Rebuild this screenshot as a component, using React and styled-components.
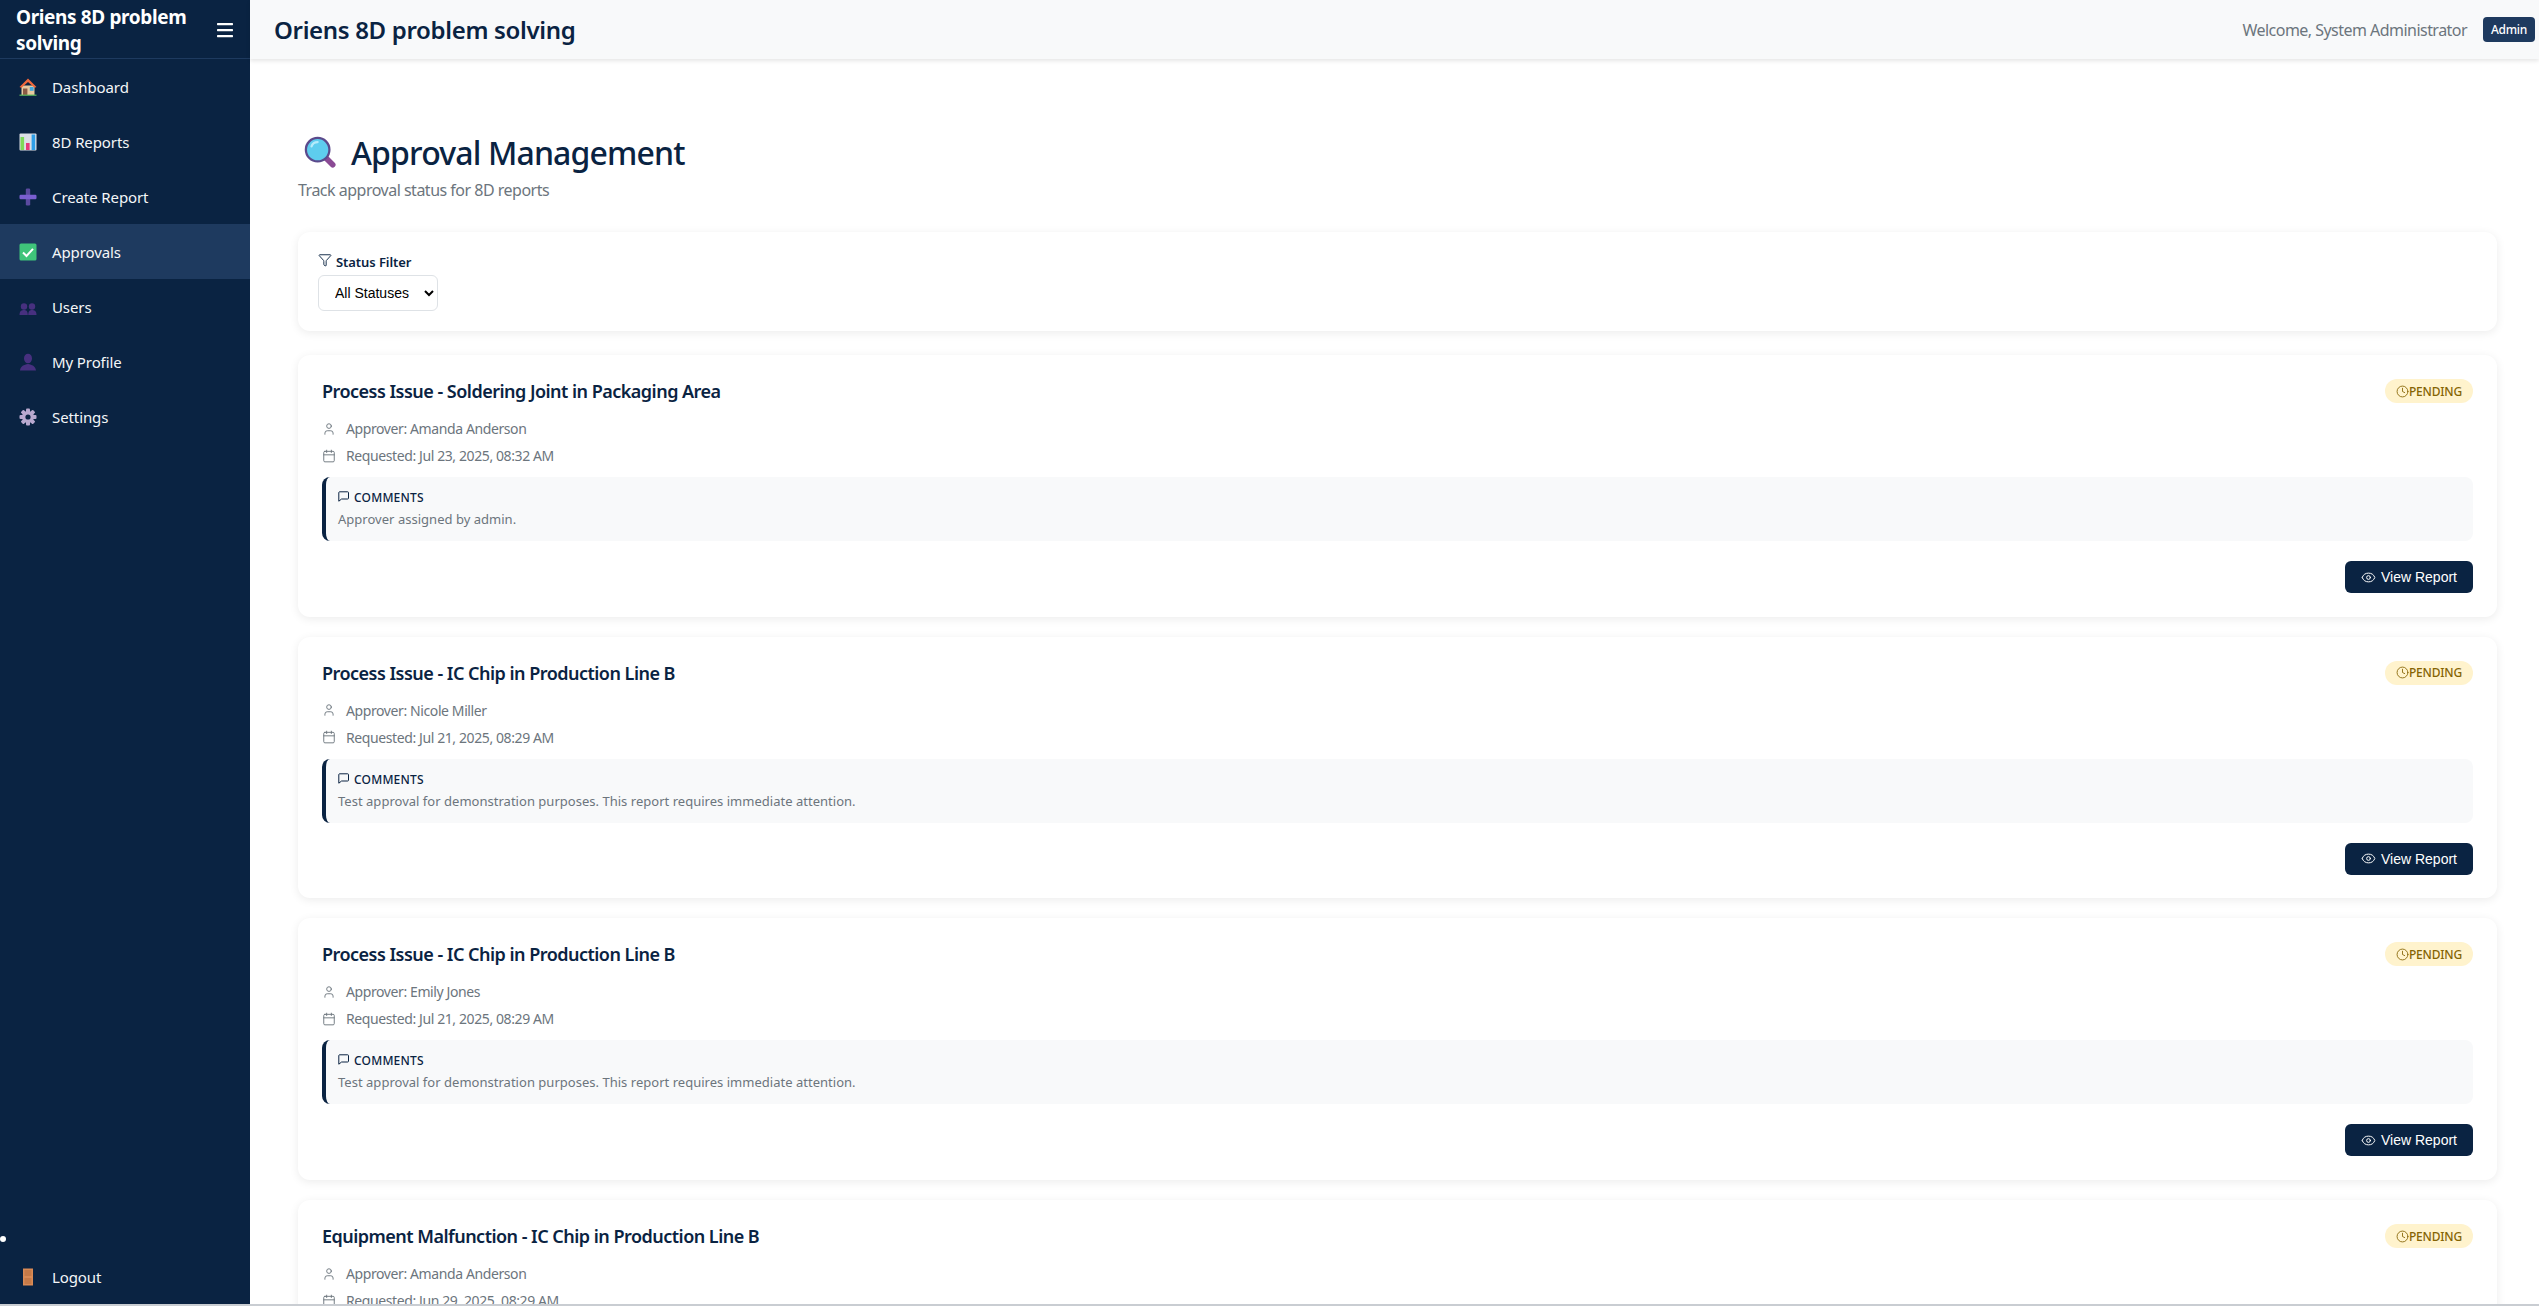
import React from "react";
import styled, { createGlobalStyle } from "styled-components";
import { Filter, User, Calendar, Clock, Eye } from "lucide-react";

const Global = createGlobalStyle`
  html, body { margin: 0; padding: 0; height: 100%; overflow: hidden; background: #fff; }
  * { box-sizing: border-box; }
  body { font-family: "Noto Sans", "Open Sans", sans-serif; color: #0a2342; }
`;

const Shell = styled.div`
  display: flex;
  height: 1304px;
  overflow: hidden;
  background: #fff;
`;
const BottomLine = styled.div`
  height: 2px;
  background: #c9cdd2;
`;
const Sidebar = styled.aside`
  width: 250px;
  flex: none;
  display: flex;
  flex-direction: column;
  background: #0a2342;
  color: #fff;
`;
const Brand = styled.div`
  height: 59px;
  display: flex;
  align-items: center;
  justify-content: space-between;
  padding: 1px 16px 0;
  border-bottom: 1px solid #1e3a5f;
`;
const BrandName = styled.div`
  font-size: 19px;
  font-weight: 700;
  line-height: 26px;
  letter-spacing: -0.37px;
  width: 190px;
`;
const Burger = styled.svg`
  width: 16px;
  height: 16px;
  flex: none;
  margin-right: 1px;
`;
const Nav = styled.nav`
  flex: 1;
  display: flex;
  flex-direction: column;
`;
const NavItem = styled.div`
  height: 55px;
  display: flex;
  align-items: center;
  gap: 15px;
  padding-left: 19px;
  font-size: 15px;
  letter-spacing: -0.1px;
  color: #f4f6f8;
  background: ${(p) => (p.$active ? "#1e3a5f" : "transparent")};
`;
const Emoji = styled.svg`
  width: 18px;
  height: 18px;
  flex: none;
`;
const Footer = styled.div`
  display: flex;
  flex-direction: column;
`;
const Bullet = styled.span`
  width: 6px;
  height: 6px;
  border-radius: 50%;
  background: #fff;
  margin-bottom: 7px;
`;
const Column = styled.div`
  flex: 1;
  min-width: 0;
  display: flex;
  flex-direction: column;
`;
const Header = styled.header`
  height: 59px;
  flex: none;
  display: flex;
  align-items: center;
  justify-content: space-between;
  padding: 0 4px 0 24px;
  background: #f8f9fa;
  box-shadow: 0 2px 4px rgba(0, 0, 0, 0.1);
  position: relative;
`;
const HeaderTitle = styled.div`
  font-size: 24px;
  font-weight: 600;
  letter-spacing: -0.33px;
  color: #0a2342;
`;
const HeaderRight = styled.div`
  display: flex;
  align-items: center;
  gap: 16px;
`;
const Welcome = styled.span`
  font-size: 16px;
  letter-spacing: -0.53px;
  color: #6c757d;
`;
const RoleBadge = styled.span`
  height: 25px;
  padding: 0 8px;
  display: flex;
  align-items: center;
  background: #1e3a5f;
  color: #fff;
  border-radius: 4px;
  font-size: 12px;
  font-weight: 500;
  letter-spacing: -0.3px;
`;
const Main = styled.main`
  flex: 1;
  overflow: hidden;
  padding: 69px 42px 0 48px;
`;
const PageTitle = styled.h1`
  margin: 0;
  height: 48px;
  display: flex;
  align-items: center;
  gap: 15px;
  padding-left: 6px;
  font-size: 32px;
  font-weight: 500;
  letter-spacing: -0.85px;
  color: #0a2342;
`;
const Subtitle = styled.p`
  margin: 2px 0 30px;
  height: 24px;
  line-height: 24px;
  font-size: 16px;
  letter-spacing: -0.5px;
  color: #6c757d;
`;
const FilterCard = styled.section`
  height: 99px;
  margin-bottom: 24px;
  padding: 18px 20px;
  background: #fff;
  border-radius: 12px;
  box-shadow: 0 2px 10px rgba(0, 0, 0, 0.08);
`;
const FilterLabel = styled.label`
  display: flex;
  align-items: center;
  gap: 4px;
  height: 23px;
  font-size: 13px;
  font-weight: 600;
  letter-spacing: -0.07px;
  color: #0a2342;
`;
const FilterGlyph = styled(Filter)`
  margin-top: -3px;
`;
const StatusSelect = styled.select`
  display: block;
  width: 120px;
  height: 36px;
  margin-top: 2px;
  padding: 0 12px;
  border: 1px solid #dee2e6;
  border-radius: 6px;
  background: #fff;
  color: #000;
  font-family: "Liberation Sans", Arial, sans-serif;
  font-size: 14px;
`;
const Card = styled.article`
  height: 261.7px;
  margin-bottom: 20px;
  padding: 24px;
  background: #fff;
  border-radius: 12px;
  box-shadow: 0 2px 10px rgba(0, 0, 0, 0.08);
`;
const CardTop = styled.div`
  display: flex;
  justify-content: space-between;
  align-items: center;
  height: 24px;
  margin-bottom: 12px;
`;
const CardTitle = styled.h3`
  margin: 0;
  font-size: 18px;
  font-weight: 600;
  letter-spacing: -0.52px;
  color: #0a2342;
`;
const Pending = styled.span`
  height: 24px;
  width: 88px;
  display: flex;
  align-items: center;
  justify-content: center;
  border-radius: 12px;
  background: #fff3cd;
  color: #856404;
  font-size: 12px;
  font-weight: 500;
  letter-spacing: -0.2px;
`;
const Meta = styled.div`
  display: flex;
  align-items: center;
  gap: 10px;
  height: 27px;
  font-size: 14px;
  letter-spacing: -0.4px;
  color: #6c757d;
`;
const Comments = styled.div`
  height: 64px;
  margin-top: 8px;
  padding: 11px 12px 0;
  background: #f8f9fa;
  border-left: 4px solid #0a2342;
  border-radius: 8px;
`;
const CommentsHead = styled.div`
  display: flex;
  align-items: center;
  gap: 5px;
  height: 19px;
  font-size: 12px;
  font-weight: 500;
  letter-spacing: 0.2px;
  text-transform: uppercase;
  color: #0a2342;
`;
const CommentGlyph = styled.svg`
  width: 11px;
  height: 11px;
  flex: none;
  margin-top: -2px;
`;
const CommentsBody = styled.div`
  height: 20px;
  line-height: 20px;
  margin-top: 2px;
  font-size: 13px;
  letter-spacing: 0.02px;
  color: #6c757d;
`;
const CardActions = styled.div`
  display: flex;
  justify-content: flex-end;
  margin-top: 20px;
`;
const ViewButton = styled.button`
  width: 128px;
  height: 32px;
  display: flex;
  align-items: center;
  justify-content: center;
  gap: 5px;
  border: 0;
  border-radius: 6px;
  background: #0a2342;
  color: #fff;
  font-family: "Liberation Sans", Arial, sans-serif;
  font-size: 14px;
`;

const HomeIcon = () => (
  <Emoji viewBox="0 0 18 18">
    <rect x="2.5" y="7.5" width="13" height="9.5" fill="#e8c9a0" />
    <path d="M9 0.5 L0.5 9 L2.5 9.8 L9 4 L15.5 9.8 L17.5 9 Z" fill="#f0683c" />
    <rect x="4" y="10.5" width="4.4" height="6.5" fill="#8a5a44" />
    <rect x="10.8" y="9" width="3.8" height="3.8" fill="#3fa9e0" />
    <rect x="0.5" y="16.6" width="17" height="1.2" fill="#5cb85c" />
  </Emoji>
);
const ChartIcon = () => (
  <Emoji viewBox="0 0 18 18">
    <rect x="0.5" y="0.5" width="17" height="17" rx="1" fill="#dcdfe6" />
    <rect x="1.5" y="4" width="3.6" height="13" fill="#7ed957" />
    <rect x="7" y="10" width="3.6" height="7" fill="#e6397a" />
    <rect x="12.6" y="1.5" width="3.6" height="15.5" fill="#2f9ee6" />
  </Emoji>
);
const PlusIcon = () => (
  <Emoji viewBox="0 0 18 18">
    <rect x="6.8" y="0.5" width="4.4" height="17" rx="1.2" fill="#5b4a9f" />
    <rect x="0.5" y="6.8" width="17" height="4.4" rx="1.2" fill="#7a5fd0" />
  </Emoji>
);
const CheckIcon = () => (
  <Emoji viewBox="0 0 18 18">
    <rect x="0.5" y="0.5" width="17" height="17" rx="1.5" fill="#3fc47a" />
    <path d="M4 9.5 L7.5 13 L14 5.8" fill="none" stroke="#fff" strokeWidth="2" />
  </Emoji>
);
const UsersIcon = () => (
  <Emoji viewBox="0 0 18 18">
    <circle cx="5" cy="8.5" r="3.2" fill="#47307f" />
    <circle cx="13" cy="8.5" r="3.2" fill="#47307f" />
    <path d="M0.5 17 C0.5 12.5 3 12 5 12 C7 12 8.6 12.5 8.8 17 Z" fill="#47307f" />
    <path d="M9.2 17 C9.4 12.5 11 12 13 12 C15 12 17.5 12.5 17.5 17 Z" fill="#47307f" />
  </Emoji>
);
const ProfileIcon = () => (
  <Emoji viewBox="0 0 18 18">
    <ellipse cx="9" cy="5.5" rx="4" ry="4.8" fill="#47307f" />
    <path d="M1 17.5 C1.5 12.8 5 12 9 11 C13 12 16.5 12.8 17 17.5 Z" fill="#47307f" />
  </Emoji>
);
const GearIcon = () => (
  <Emoji viewBox="0 0 18 18">
    <g fill="#b9a9cf">
      {[0, 45, 90, 135].map((a) => (
        <rect key={a} x="7" y="0.5" width="4" height="17" rx="1" transform={`rotate(${a} 9 9)`} />
      ))}
      <circle cx="9" cy="9" r="6" />
    </g>
    <circle cx="9" cy="9" r="2.6" fill="#0a2342" />
  </Emoji>
);
const DoorIcon = () => (
  <Emoji viewBox="0 0 18 18">
    <rect x="4" y="0.5" width="10" height="17" fill="#d98a55" />
    <rect x="5.5" y="2" width="7" height="6" fill="#c67a48" />
    <rect x="5.5" y="10" width="7" height="6" fill="#c67a48" />
  </Emoji>
);
const Magnifier = () => (
  <svg width="32" height="32" viewBox="0 0 34 34" style={{ flex: "none" }}>
    <path d="M22 22 L30.5 30.5" stroke="#8a4a94" strokeWidth="6" strokeLinecap="round" />
    <circle cx="14.5" cy="14.5" r="12.5" fill="#5ecdee" stroke="#5b4a8c" strokeWidth="2.4" />
    <path d="M8 11 C9 8 11.5 6.5 14.5 6.5" stroke="#b5ebfa" strokeWidth="2.4" fill="none" strokeLinecap="round" />
  </svg>
);

const navItems = [
  ["Dashboard", HomeIcon],
  ["8D Reports", ChartIcon],
  ["Create Report", PlusIcon],
  ["Approvals", CheckIcon, true],
  ["Users", UsersIcon],
  ["My Profile", ProfileIcon],
  ["Settings", GearIcon],
];

const reports = [
  {
    title: "Process Issue - Soldering Joint in Packaging Area",
    approver: "Amanda Anderson",
    date: "Jul 23, 2025, 08:32 AM",
    comment: "Approver assigned by admin.",
  },
  {
    title: "Process Issue - IC Chip in Production Line B",
    approver: "Nicole Miller",
    date: "Jul 21, 2025, 08:29 AM",
    comment: "Test approval for demonstration purposes. This report requires immediate attention.",
  },
  {
    title: "Process Issue - IC Chip in Production Line B",
    approver: "Emily Jones",
    date: "Jul 21, 2025, 08:29 AM",
    comment: "Test approval for demonstration purposes. This report requires immediate attention.",
  },
  {
    title: "Equipment Malfunction - IC Chip in Production Line B",
    approver: "Amanda Anderson",
    date: "Jun 29, 2025, 08:29 AM",
  },
];

export default function App() {
  return (
    <>
      <Global />
      <Shell>
        <Sidebar>
          <Brand>
            <BrandName>Oriens 8D problem solving</BrandName>
            <Burger viewBox="0 0 16 16">
              <rect x="0" y="1" width="16" height="2.2" rx="0.6" fill="#fff" />
              <rect x="0" y="7" width="16" height="2.2" rx="0.6" fill="#fff" />
              <rect x="0" y="13" width="16" height="2.2" rx="0.6" fill="#fff" />
            </Burger>
          </Brand>
          <Nav>
            {navItems.map(([label, Icon, active]) => (
              <NavItem key={label} $active={active}>
                <Icon />
                {label}
              </NavItem>
            ))}
          </Nav>
          <Footer>
            <Bullet />
            <NavItem>
              <DoorIcon />
              Logout
            </NavItem>
          </Footer>
        </Sidebar>
        <Column>
          <Header>
            <HeaderTitle>Oriens 8D problem solving</HeaderTitle>
            <HeaderRight>
              <Welcome>Welcome, System Administrator</Welcome>
              <RoleBadge>Admin</RoleBadge>
            </HeaderRight>
          </Header>
          <Main>
            <PageTitle>
              <Magnifier />
              Approval Management
            </PageTitle>
            <Subtitle>Track approval status for 8D reports</Subtitle>
            <FilterCard>
              <FilterLabel>
                <FilterGlyph size={14} strokeWidth={1.6} />
                Status Filter
              </FilterLabel>
              <StatusSelect defaultValue="all">
                <option value="all">All Statuses</option>
                <option value="pending">Pending</option>
                <option value="approved">Approved</option>
              </StatusSelect>
            </FilterCard>
            {reports.map((r, i) => (
              <Card key={i}>
                <CardTop>
                  <CardTitle>{r.title}</CardTitle>
                  <Pending>
                    <Clock size={13} strokeWidth={1.6} />
                    PENDING
                  </Pending>
                </CardTop>
                <Meta>
                  <User size={14} strokeWidth={1.6} />
                  Approver: {r.approver}
                </Meta>
                <Meta>
                  <Calendar size={14} strokeWidth={1.6} />
                  Requested: {r.date}
                </Meta>
                {r.comment && (
                  <>
                    <Comments>
                      <CommentsHead>
                        <CommentGlyph viewBox="0 0 11 11" fill="none" stroke="currentColor" strokeWidth="1">
                          <path d="M1.5 0.8 H9.7 A0.8 0.8 0 0 1 10.5 1.6 V7.2 A0.8 0.8 0 0 1 9.7 8 H3.6 L0.8 10.2 V1.5 A0.8 0.8 0 0 1 1.5 0.8 Z" />
                        </CommentGlyph>
                        Comments
                      </CommentsHead>
                      <CommentsBody>{r.comment}</CommentsBody>
                    </Comments>
                    <CardActions>
                      <ViewButton>
                        <Eye size={15} strokeWidth={1.6} />
                        View Report
                      </ViewButton>
                    </CardActions>
                  </>
                )}
              </Card>
            ))}
          </Main>
        </Column>
      </Shell>
      <BottomLine />
    </>
  );
}
